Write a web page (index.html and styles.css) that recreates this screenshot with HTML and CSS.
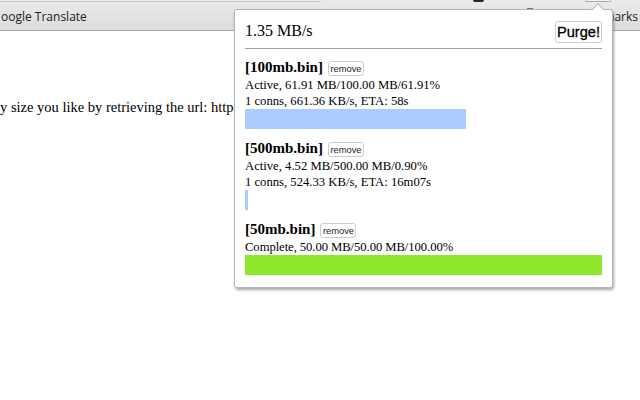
FILE: index.html
```html
<!DOCTYPE html>
<html lang="en">
<head>
  <meta charset="UTF-8" />
  <title>Download Manager</title>
  <link rel="stylesheet" href="styles.css">
</head>
<body>

  <!-- browser bookmarks bar -->
  <div class="bookmarks">
    <span class="bm-left">oogle Translate</span>
    <span class="bm-right">marks</span>
  </div>

  <!-- bits of the browser toolbar above the bar -->
  <div class="tab-edge"></div>
  <div class="tb-icon"></div>
  <div class="tb-speck"></div>
  <div class="tb-button"></div>

  <!-- page behind the popup -->
  <p class="page-text">y size you like by retrieving the url: http://www.example.com/files/download/testfiles/100mb.bin and more text</p>

  <!-- extension popup -->
  <div class="arrow"></div>
  <div class="popup">
    <div class="popup-head">
      <span class="speed">1.35 MB/s</span>
      <button class="purge">Purge!</button>
    </div>
    <hr class="rule">

    <div class="item">
      <div class="name-row"><b class="name">[100mb.bin]</b><button class="remove">remove</button></div>
      <div class="info">Active, 61.91 MB/100.00 MB/61.91%</div>
      <div class="info">1 conns, 661.36 KB/s, ETA: 58s</div>
      <div class="bar active" style="width: 61.91%"></div>
    </div>

    <div class="item">
      <div class="name-row"><b class="name">[500mb.bin]</b><button class="remove">remove</button></div>
      <div class="info">Active, 4.52 MB/500.00 MB/0.90%</div>
      <div class="info">1 conns, 524.33 KB/s, ETA: 16m07s</div>
      <div class="bar active" style="width: 0.9%"></div>
    </div>

    <div class="item">
      <div class="name-row"><b class="name">[50mb.bin]</b><button class="remove">remove</button></div>
      <div class="info tight">Complete, 50.00 MB/50.00 MB/100.00%</div>
      <div class="bar done" style="width: 100%"></div>
    </div>
  </div>

</body>
</html>
```

FILE: styles.css
```css
html, body { height: 100%; }
body {
  margin: 0;
  background: #fff;
  color: #000;
  font-family: "Liberation Serif", serif;
  overflow: hidden;
  position: relative;
}

/* bookmarks bar */
.bookmarks {
  height: 28px;
  padding-top: 2px;
  border-bottom: 1px solid #a9a9a9;
  background: linear-gradient(#ebebeb, #dcdcdc);
  display: flex;
  justify-content: space-between;
  align-items: center;
  font: 12px "Open Sans", "Liberation Sans", sans-serif;
  color: #222;
  white-space: nowrap;
}
.bm-left { margin-left: 1px; }
.bm-right { margin-right: 2px; }

/* toolbar leftovers */
.tab-edge {
  position: absolute;
  top: 0; left: 0;
  width: 321px; height: 1px;
  background: #f0f0f0;
  border-bottom: 1px solid #c4c4c4;
}
.tb-icon {
  position: absolute;
  top: 0; left: 473px;
  width: 11px; height: 2px;
  background: #3a1a3a;
  border-radius: 0 0 4px 4px;
}
.tb-speck {
  position: absolute;
  top: 8px; left: 527px;
  width: 6px; height: 1px;
  background: #8a6a4a;
}
.tb-button {
  position: absolute;
  top: 0; left: 585px;
  width: 24px; height: 1px;
  background: #f4f4f4;
  border: 1px solid #a8a8a8;
  border-top: none;
  border-radius: 0 0 3px 3px;
}

.page-text {
  margin: 67px 0 0;
  width: 613px;
  overflow: hidden;
  font-size: 14.5px;
  line-height: 18px;
  white-space: nowrap;
}

/* popup */
.popup {
  position: absolute;
  top: 9px; left: 234px;
  width: 357px;
  padding: 10px 10px 12px;
  background: #fff;
  border: 1px solid #b5b5b5;
  border-radius: 3px;
  box-shadow: 1px 2px 3px rgba(0,0,0,0.35);
}
.arrow {
  position: absolute;
  top: 5px; left: 593px;
  width: 9px; height: 9px;
  background: #fff;
  border-top: 1px solid #b5b5b5;
  border-left: 1px solid #b5b5b5;
  transform: rotate(45deg);
  z-index: 2;
}
.popup-head {
  display: flex;
  justify-content: space-between;
  align-items: center;
  height: 23px;
}
.speed { font-size: 16px; margin-top: -1px; }
.purge {
  width: 47px; height: 22px;
  padding: 0;
  background: #fff;
  border: 1px solid #ccc;
  border-radius: 3px;
  font: 14.67px "Liberation Sans", sans-serif;
  -webkit-text-stroke: 0.3px #000;
  color: #000;
}
.rule {
  margin: 5px 0 9px;
  border: none;
  border-top: 1px solid #a0a0a0;
  height: 0;
}

.item { margin-bottom: 10px; }
.item:last-child { margin-bottom: 0; }
.name-row { display: flex; align-items: center; height: 19px; }
.name { font-size: 15px; }
.remove {
  margin: 2px 0 0 5px;
  width: 36px; height: 15px;
  padding: 0;
  background: #fff;
  border: 1px solid #ccc;
  border-radius: 3px;
  font: 9.33px "Liberation Sans", sans-serif;
  color: #222;
}
.info { font-size: 12.67px; line-height: 16px; white-space: nowrap; }
.info.tight { letter-spacing: -0.07px; }
.bar { height: 20px; }
.bar.active { background: #aaccff; }
.bar.done { background: #8ee82e; }
```
